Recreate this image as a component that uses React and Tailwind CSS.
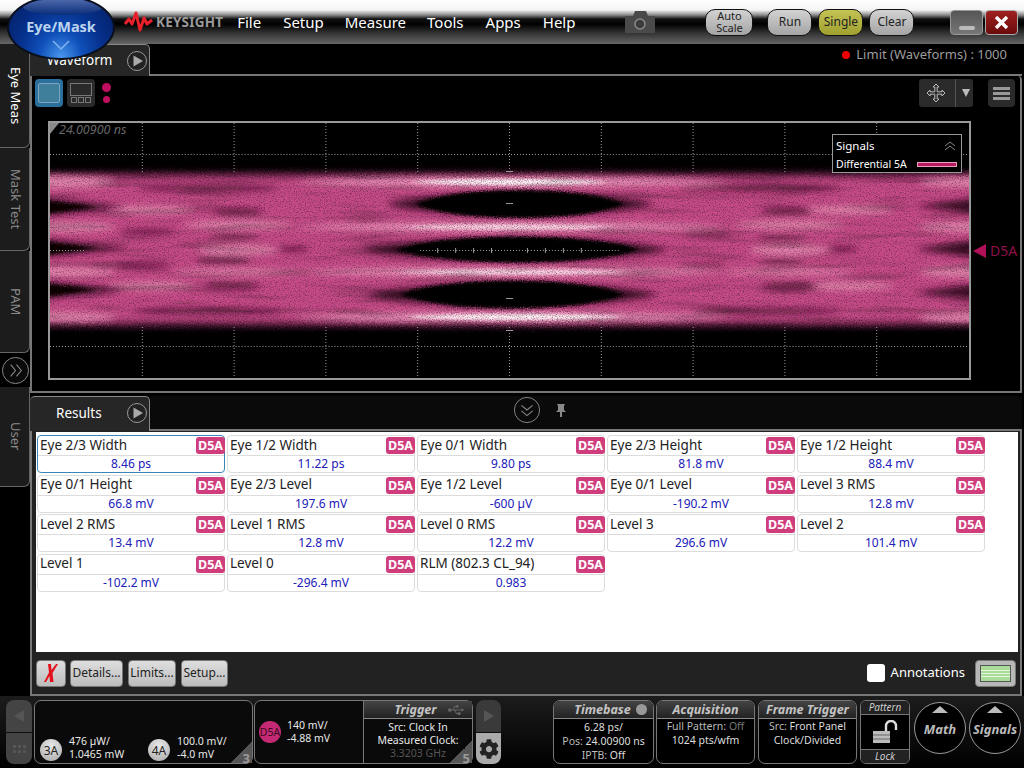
import React from 'react';
import { FaCog, FaUsb } from 'react-icons/fa';

const menuItems = [
    ['File', 'ml-[14px]'],
    ['Setup', 'ml-[22px]'],
    ['Measure', 'ml-[21px]'],
    ['Tools', 'ml-[21px]'],
    ['Apps', 'ml-[22px]'],
    ['Help', 'ml-[22px]'],
];

const results = [
    ['Eye 2/3 Width', '8.46 ps'],
    ['Eye 1/2 Width', '11.22 ps'],
    ['Eye 0/1 Width', '9.80 ps'],
    ['Eye 2/3 Height', '81.8 mV'],
    ['Eye 1/2 Height', '88.4 mV'],
    ['Eye 0/1 Height', '66.8 mV'],
    ['Eye 2/3 Level', '197.6 mV'],
    ['Eye 1/2 Level', '-600 µV'],
    ['Eye 0/1 Level', '-190.2 mV'],
    ['Level 3 RMS', '12.8 mV'],
    ['Level 2 RMS', '13.4 mV'],
    ['Level 1 RMS', '12.8 mV'],
    ['Level 0 RMS', '12.2 mV'],
    ['Level 3', '296.6 mV'],
    ['Level 2', '101.4 mV'],
    ['Level 1', '-102.2 mV'],
    ['Level 0', '-296.4 mV'],
    ['RLM (802.3 CL_94)', '0.983'],
];

const darkPatches = [
    [207, 188, 70, 3], [237, 212, 26, 3.5], [147, 232, 28, 2.5], [233, 237, 26, 2.5],
    [143, 265, 28, 2.5], [223, 260, 28, 3.5], [232, 286, 28, 3.5], [207, 311, 75, 3],
    [293, 249, 16, 2.5], [760, 188, 80, 3], [787, 211, 26, 3.5], [707, 232, 24, 2.5],
    [783, 238, 26, 2.5], [703, 266, 24, 2], [783, 262, 24, 2.5], [790, 286, 28, 3.5],
    [767, 311, 75, 3], [843, 249, 16, 2.5],
];

const lightPatches = [
    [237, 225, 55, 4], [237, 250, 40, 5], [790, 250, 40, 5], [790, 225, 55, 4],
    [150, 210, 45, 4], [850, 210, 45, 4], [150, 286, 45, 4], [850, 286, 45, 4],
    [237, 272, 65, 3], [790, 272, 65, 3], [60, 182, 55, 6], [60, 227, 55, 5],
    [60, 272, 55, 5], [60, 317, 55, 5], [965, 182, 45, 5], [965, 227, 45, 5],
    [965, 272, 45, 5], [965, 317, 45, 5],
];

const gridX = [141, 233, 325, 417, 509, 601, 693, 785, 877];

// blunt lens between two x positions, h is the half height at the middle
function lens(x0, x1, y, h) {
    const d = h * 1.33;
    const w = (x1 - x0) * 0.2;
    return `M${x0} ${y} C${x0 + w} ${y - d} ${x1 - w} ${y - d} ${x1} ${y} C${x1 - w} ${y + d} ${x0 + w} ${y + d} ${x0} ${y} Z`;
}

function PlayCircle() {
    return (
        <svg width="22" height="22" viewBox="0 0 22 22">
            <circle cx="11" cy="11" r="9.5" fill="#222" stroke="#999" strokeWidth="1"/>
            <path d="M7.5 5.5 L17 11 L7.5 16.5 Z" fill="#aaa"/>
        </svg>
    );
}

function Chevrons({size = 30}) {
    return (
        <svg width={size} height={size} viewBox="0 0 30 30">
            <circle cx="15" cy="15" r="13.5" fill="#0a0a0a" stroke="#8a8a8a" strokeWidth="1"/>
            <path d="M9 10 L15 15 L21 10 M9 16 L15 21 L21 16" fill="none" stroke="#8a8a8a" strokeWidth="1.1"/>
        </svg>
    );
}

function SideChevrons() {
    return (
        <svg width="29" height="29" viewBox="0 0 30 30">
            <circle cx="15" cy="15" r="13.5" fill="#0a0a0a" stroke="#8a8a8a" strokeWidth="1"/>
            <path d="M10 9 L15 15 L10 21 M16 9 L21 15 L16 21" fill="none" stroke="#8a8a8a" strokeWidth="1.1"/>
        </svg>
    );
}

function TopButton({children, className = ''}) {
    return (
        <div className={`flex h-[27px] items-center justify-center rounded-[10px] border border-[#111] text-center text-[12px] text-[#222] ${className}`}>
            {children}
        </div>
    );
}

function TopBar() {
    return (
        <div className="flex h-[44px] shrink-0 items-center bg-[linear-gradient(to_bottom,#fff_0px,#f4f4f4_10px,#8a8a8a_15px,#111_19px,#000_24px,#333_33px,#666_44px)]">
            <div className="ml-[124px] flex items-center">
                <svg width="29" height="24" viewBox="0 0 29 24">
                    <path d="M1 14 L5 9 L8 14 L12 3 L16 20 L20 8 L23 14 L28 10" fill="none" stroke="#e8202c" strokeWidth="3" strokeLinejoin="round"/>
                </svg>
                <span className="ml-[3px] text-[13.5px] font-bold tracking-[0.2px] text-[#9a9a9a]">KEYSIGHT</span>
            </div>
            {menuItems.map(([label, margin]) => (
                <span key={label} className={`${margin} text-[15px] text-white`}>{label}</span>
            ))}
            <svg className="ml-[50px]" width="30" height="24" viewBox="0 0 30 24">
                <path d="M0 6 H8 L10 1 H21 L23 6 H30 V23 H0 Z" fill="#4a4a4a"/>
                <circle cx="15" cy="14" r="5" fill="#3c3c3c" stroke="#8a8a8a" strokeWidth="1.5"/>
            </svg>
            <TopButton className="ml-[50px] w-[48px] bg-[linear-gradient(to_bottom,#d2d2d2,#a4a4a4)]">
                <span className="text-[11px] leading-[12px]">Auto<br/>Scale</span>
            </TopButton>
            <TopButton className="ml-[14px] w-[45px] bg-[linear-gradient(to_bottom,#d2d2d2,#a4a4a4)]">Run</TopButton>
            <TopButton className="ml-[6px] w-[45px] bg-[linear-gradient(to_bottom,#c4c454,#a0a030)]">Single</TopButton>
            <TopButton className="ml-[6px] w-[45px] bg-[linear-gradient(to_bottom,#d2d2d2,#a4a4a4)]">Clear</TopButton>
            <div className="ml-[36px] flex h-[25px] w-[33px] items-end justify-center rounded-[4px] border border-[#999] bg-[linear-gradient(to_bottom,#555,#777)] pb-[4px]">
                <div className="h-[4px] w-[16px] rounded-[2px] bg-[#bbb]"/>
            </div>
            <div className="ml-[2px] flex h-[25px] w-[33px] items-center justify-center rounded-[4px] border border-[#aaa] bg-[linear-gradient(to_bottom,#a02020,#6a0c0c)]">
                <svg width="15" height="13" viewBox="0 0 15 13">
                    <path d="M2 1 L13 12 M13 1 L2 12" stroke="#fff" strokeWidth="3.4"/>
                </svg>
            </div>
        </div>
    );
}

function EyeMaskOrb() {
    return (
        <div className="absolute left-[7px] top-[-5px] z-20 flex h-[65px] w-[108px] flex-col items-center overflow-hidden rounded-[50%] border-2 border-[#0a0f1c] bg-[radial-gradient(ellipse_at_50%_100%,#4a98f0_0%,#0f4fb8_30%,#06308c_58%,#031c5c_100%)]">
            <div className="absolute left-[14px] top-[2px] h-[16px] w-[80px] rounded-[50%] bg-[linear-gradient(to_bottom,#6f86c0,#0a2a70)] opacity-70"/>
            <span className="relative mt-[19px] text-[14.5px] font-bold text-[#bcd4ee]">Eye/Mask</span>
            <svg className="relative mt-[2px]" width="18" height="10" viewBox="0 0 18 10">
                <path d="M1 1 L9 9 L17 1" fill="none" stroke="#7fb4ee" strokeWidth="1.5"/>
            </svg>
        </div>
    );
}

function SideTab({label, active, className = ''}) {
    return (
        <div className={`flex w-[30px] items-center justify-center rounded-br-[6px] border-b border-r border-[#666] bg-[#1c1c1c] pl-[2px] ${className}`}>
            <span className={`text-[13px] [writing-mode:vertical-rl] ${active ? 'text-white' : 'text-[#8a8a8a]'}`}>{label}</span>
        </div>
    );
}

function LeftTabs() {
    return (
        <div className="flex w-[30px] shrink-0 flex-col bg-black">
            <SideTab label="Eye Meas" active className="h-[104px]"/>
            <SideTab label="Mask Test" className="h-[103px]"/>
            <SideTab label="PAM" className="h-[102px]"/>
            <div className="flex h-[34px] items-center justify-center"><SideChevrons/></div>
            <SideTab label="User" className="h-[100px]"/>
        </div>
    );
}

function WaveImage() {
    return (
        <svg className="absolute inset-0 h-full w-full" viewBox="49 123 921 255" preserveAspectRatio="none">
            <defs>
                <filter id="soft" x="-50%" y="-200%" width="200%" height="500%">
                    <feGaussianBlur stdDeviation="3"/>
                </filter>
                <filter id="softer" x="-50%" y="-200%" width="200%" height="500%">
                    <feGaussianBlur stdDeviation="1.5"/>
                </filter>
                <filter id="grain" filterUnits="userSpaceOnUse" x="0" y="100" width="1024" height="300" colorInterpolationFilters="sRGB">
                    <feTurbulence type="fractalNoise" baseFrequency="0.8" numOctaves="2" seed="7" result="n"/>
                    <feDisplacementMap in="SourceGraphic" in2="n" scale="5" xChannelSelector="R" yChannelSelector="G" result="d"/>
                    <feColorMatrix in="n" type="matrix" values="1.1 0 0 0 0.42  1.1 0 0 0 0.42  1.1 0 0 0 0.42  0 0 0 0 1" result="g"/>
                    <feBlend in="d" in2="g" mode="multiply" result="speck"/>
                    <feTurbulence type="fractalNoise" baseFrequency="0.012 0.13" numOctaves="2" seed="3" result="s"/>
                    <feColorMatrix in="s" type="matrix" values="0.6 0 0 0 0.7  0.6 0 0 0 0.7  0.6 0 0 0 0.7  0 0 0 0 1" result="streak"/>
                    <feBlend in="speck" in2="streak" mode="multiply"/>
                </filter>
            </defs>
            <rect x="49" y="123" width="921" height="255" fill="#000"/>
            <g filter="url(#grain)">
                <rect x="0" y="100" width="1024" height="300" fill="#000"/>
                <rect x="20" y="172" width="984" height="155" fill="#6a2048" filter="url(#soft)"/>
                <rect x="20" y="178" width="984" height="143" fill="#c64c88" filter="url(#soft)"/>
                <g filter="url(#soft)">
                    {lightPatches.map(([x, y, rx, ry]) => (
                        <ellipse key={`${x}-${y}`} cx={x} cy={y} rx={rx} ry={ry} fill="#e284ac"/>
                    ))}
                    {darkPatches.map(([x, y, rx, ry]) => (
                        <ellipse key={`${x}-${y}`} cx={x} cy={y} rx={rx} ry={ry} fill="#4c1030" opacity="0.8"/>
                    ))}
                    <path d={lens(290, 730, 182, 5)} fill="#ea92b8"/>
                    <path d={lens(290, 730, 227, 4.5)} fill="#ea92b8"/>
                    <path d={lens(290, 730, 272, 4.5)} fill="#ea92b8"/>
                    <path d={lens(290, 730, 317, 5)} fill="#ea92b8"/>
                </g>
                <g filter="url(#soft)">
                    <path d={lens(385, 655, 204, 11)} fill="#3c0c26"/>
                    <path d={lens(360, 670, 249.5, 11)} fill="#3c0c26"/>
                    <path d={lens(365, 660, 294.5, 11)} fill="#3c0c26"/>
                    <path d="M40 198 L125 207 L40 216 Z" fill="#3c0c26"/>
                    <path d="M40 239 L130 248 L40 257 Z" fill="#3c0c26"/>
                    <path d="M40 281 L125 290 L40 299 Z" fill="#3c0c26"/>
                    <path d="M980 198 L915 206 L980 214 Z" fill="#3c0c26"/>
                    <path d="M980 240 L915 249 L980 258 Z" fill="#3c0c26"/>
                    <path d="M980 284 L915 292 L980 300 Z" fill="#3c0c26"/>
                </g>
                <g filter="url(#softer)">
                    <path d={lens(415, 625, 204, 14)} fill="#000"/>
                    <path d={lens(395, 640, 249.5, 13)} fill="#000"/>
                    <path d={lens(400, 625, 294.5, 14)} fill="#000"/>
                    <path d="M40 200 L95 207 L40 214 Z" fill="#0a0205"/>
                    <path d="M40 241 L95 248 L40 255 Z" fill="#0a0205"/>
                    <path d="M40 283 L95 290 L40 297 Z" fill="#0a0205"/>
                    <path d={lens(410, 610, 182, 3)} fill="#fff0f6"/>
                    <path d={lens(400, 620, 227, 2.6)} fill="#fbd5e5"/>
                    <path d={lens(395, 630, 272, 2.6)} fill="#fbd5e5"/>
                    <path d={lens(405, 625, 317, 3)} fill="#fff0f6"/>
                </g>
            </g>
            <g stroke="#9a9a9a" strokeWidth="1" strokeDasharray="1 2">
                {gridX.map((x) => (
                    <path key={x} d={`M${x + 0.5} 123 V172 M${x + 0.5} 327 V378`}/>
                ))}
                <path d="M49 154.5 H970 M49 346.5 H970 M49 250.5 H85 M420 250.5 H620"/>
            </g>
            <g stroke="#9a9a9a" strokeWidth="1">
                {[437, 455, 473, 491, 527, 545, 563, 581].map((x) => (
                    <path key={x} d={`M${x + 0.5} 248 V253`}/>
                ))}
                <path d="M506 203.5 H513 M506 298.5 H513 M506 171.5 H513 M506 330.5 H513"/>
            </g>
            <path d="M49 123 H58 L49 134 Z" fill="#8a8a8a"/>
        </svg>
    );
}

function WaveformPanel() {
    return (
        <div className="flex h-[349px] flex-col">
            <div className="flex h-[32px] shrink-0">
                <div className="flex w-[120px] items-center justify-between rounded-tr-[5px] border-r border-t border-[#888] bg-[#262626] pl-[17px] pr-[1px]">
                    <span className="text-[13.5px] text-white">Waveform</span>
                    <PlayCircle/>
                </div>
                <div className="flex flex-1 items-start justify-end border-b-2 border-[#777] pr-[15px] pt-[1px]">
                    <div className="flex items-center text-[13px] text-[#9c9c9c]">
                        <span className="mr-[6px] h-[8px] w-[8px] rounded-full bg-[#f00000]"/>
                        Limit (Waveforms) : 1000
                    </div>
                </div>
            </div>
            <div className="flex min-h-0 flex-1 flex-col rounded-tr-[4px] border-b-2 border-l-2 border-r-2 border-[#777] bg-black">
                <div className="flex h-[32px] shrink-0 items-start pt-[3px]">
                    <div className="ml-[3px] flex h-[28px] w-[28px] items-center justify-center rounded-[4px] bg-[#2b6f9c]">
                        <div className="h-[20px] w-[22px] rounded-[2px] border border-[#7aa4c0] bg-[#3f7f9c]"/>
                    </div>
                    <div className="ml-[4px] flex h-[28px] w-[28px] flex-col items-center justify-center rounded-[4px] bg-[#2a2a2a]">
                        <div className="h-[13px] w-[22px] border border-[#777]"/>
                        <div className="mt-[1px] flex gap-[1px]">
                            <div className="h-[6px] w-[6px] border border-[#777]"/>
                            <div className="h-[6px] w-[6px] border border-[#777]"/>
                            <div className="h-[6px] w-[6px] border border-[#777]"/>
                        </div>
                    </div>
                    <div className="ml-[7px] mt-[4px] flex flex-col items-center gap-[4px]">
                        <div className="h-[9px] w-[9px] rounded-full bg-[#c00f60]"/>
                        <div className="h-[7px] w-[7px] rounded-full bg-[#c00f60]"/>
                    </div>
                    <div className="ml-auto flex h-[28px] w-[54px] items-center rounded-[3px] bg-[#2a2a2a]">
                        <svg className="ml-[7px]" width="20" height="20" viewBox="0 0 20 20">
                            <path d="M10 1 L13 4 H11.2 V8.8 H16 V7 L19 10 L16 13 V11.2 H11.2 V16 H13 L10 19 L7 16 H8.8 V11.2 H4 V13 L1 10 L4 7 V8.8 H8.8 V4 H7 Z" fill="#2a2a2a" stroke="#bbb" strokeWidth="1"/>
                        </svg>
                        <div className="ml-[9px] flex h-full items-center border-l border-[#555] pl-[6px]">
                            <div className="h-0 w-0 border-x-[4px] border-t-[8px] border-x-transparent border-t-[#bbb]"/>
                        </div>
                    </div>
                    <div className="ml-[15px] mr-[5px] flex h-[28px] w-[27px] flex-col items-center justify-center gap-[2px] rounded-[4px] bg-[#2a2a2a]">
                        <div className="h-[3px] w-[17px] bg-[#999]"/>
                        <div className="h-[3px] w-[17px] bg-[#999]"/>
                        <div className="h-[3px] w-[17px] bg-[#999]"/>
                    </div>
                </div>
                <div className="flex pt-[13px]">
                    <div className="relative ml-[16px] h-[259px] w-[923px] shrink-0 border-2 border-[#999]">
                        <WaveImage/>
                        <span className="absolute left-[9px] top-[-2px] text-[12.5px] italic text-[#666]">24.00900 ns</span>
                        <div className="absolute left-[782px] top-[11px] h-[39px] w-[130px] border border-[#999] bg-black pl-[3px] pt-[2px] text-[11.5px] leading-[18px] text-white">
                            <div className="flex items-center justify-between pr-[5px]">
                                <span>Signals</span>
                                <svg width="12" height="10" viewBox="0 0 12 10">
                                    <path d="M1 5 L6 1 L11 5 M1 9 L6 5 L11 9" fill="none" stroke="#888" strokeWidth="1"/>
                                </svg>
                            </div>
                            <div className="flex items-center justify-between pr-[4px] text-[10.5px]">
                                <span>Differential 5A</span>
                                <div className="h-[5px] w-[40px] border border-[#e8a0c0] bg-[#b81a62]"/>
                            </div>
                        </div>
                    </div>
                    <div className="ml-[2px] flex items-center">
                        <div className="h-0 w-0 border-y-[7px] border-r-[13px] border-y-transparent border-r-[#b01058]"/>
                        <span className="ml-[4px] text-[14px] text-[#8c0f48]">D5A</span>
                    </div>
                </div>
            </div>
        </div>
    );
}

function ResultCell({name, value, selected}) {
    return (
        <div className={`h-[38px] rounded-[4px] border ${selected ? 'border-[#3a86b8]' : 'border-[#dcdcdc]'}`}>
            <div className="flex h-[20px] items-center justify-between border-b border-[#dcdcdc] pl-[2px] text-[13.5px] leading-none text-[#222]">
                <span>{name}</span>
                <span className="mr-[-1px] rounded-[3px] bg-[#cf3d7c] px-[2px] py-[1px] text-[12.5px] font-bold leading-[15px] text-white">D5A</span>
            </div>
            <div className="text-center text-[12px] leading-[16px] text-[#2020b8]">{value}</div>
        </div>
    );
}

function GrayButton({children, className = ''}) {
    return (
        <div className={`flex h-[27px] items-center justify-center rounded-[4px] border border-[#777] bg-[linear-gradient(to_bottom,#dedede,#bcbcbc)] text-[12px] text-[#222] ${className}`}>
            {children}
        </div>
    );
}

function ResultsPanel() {
    return (
        <div className="flex min-h-0 flex-1 flex-col pt-[3px]">
            <div className="flex h-[35px] shrink-0">
                <div className="flex w-[120px] items-center justify-between rounded-t-[5px] border-r border-t border-[#888] bg-[#262626] pb-[2px] pl-[26px] pr-[1px]">
                    <span className="text-[13.5px] text-white">Results</span>
                    <PlayCircle/>
                </div>
                <div className="flex flex-1 items-center border-b-2 border-[#777] bg-[#0a0a0a] pb-[5px] pl-[363px]">
                    <Chevrons size={28}/>
                    <svg className="ml-[14px]" width="12" height="14" viewBox="0 0 12 14">
                        <path d="M2 1 H10 L9 3 V7 L11 9 H7 V14 H5 V9 H1 L3 7 V3 Z" fill="#888"/>
                    </svg>
                </div>
            </div>
            <div className="flex min-h-0 flex-1 flex-col border-x-2 border-b-2 border-[#777] bg-[#222]">
                <div className="ml-[4px] mr-[2px] mt-[1px] h-[220px] shrink-0 bg-white pl-[1px] pt-[3px]">
                    <div className="grid grid-cols-[188px_188px_188px_188px_188px] gap-x-[2px] gap-y-[1.5px]">
                        {results.map(([name, value], i) => (
                            <ResultCell key={name} name={name} value={value} selected={i === 0}/>
                        ))}
                    </div>
                </div>
                <div className="flex flex-1 items-center pl-[4px] pr-[4px]">
                    <GrayButton className="w-[30px]">
                        <svg width="14" height="20" viewBox="0 0 14 20">
                            <path d="M4 1 H7 L7.5 7 L12 1 H14 L8.5 10 L9.5 19 H6 L5.5 13 L2 19 H0 L5 9.5 Z" fill="#e5101c"/>
                        </svg>
                    </GrayButton>
                    <GrayButton className="ml-[4px] w-[53px]">Details...</GrayButton>
                    <GrayButton className="ml-[5px] w-[48px]">Limits...</GrayButton>
                    <GrayButton className="ml-[5px] w-[47px]">Setup...</GrayButton>
                    <div className="ml-auto h-[18px] w-[18px] rounded-[3px] bg-white"/>
                    <span className="ml-[6px] text-[13px] text-white">Annotations</span>
                    <div className="ml-[10px] flex h-[27px] w-[41px] items-center justify-center rounded-[4px] border border-[#777] bg-[#b8b8b8]">
                        <div className="flex h-[17px] w-[31px] flex-col justify-center gap-[2px] border border-[#555] bg-[#a8dc98]">
                            <div className="h-[1px] bg-[#e8f8e0]"/>
                            <div className="h-[1px] bg-[#e8f8e0]"/>
                            <div className="h-[1px] bg-[#e8f8e0]"/>
                        </div>
                    </div>
                </div>
            </div>
        </div>
    );
}

function Corner({n}) {
    return (
        <div className="absolute bottom-0 right-0 h-[22px] w-[22px] bg-[linear-gradient(135deg,transparent_50%,#555_50%)]">
            <span className="absolute bottom-[-2px] right-[2px] text-[13px] font-bold text-[#9a9a9a]">{n}</span>
        </div>
    );
}

function ChannelBadge({label}) {
    return (
        <div className="flex h-[22px] w-[22px] shrink-0 items-center justify-center rounded-full bg-[radial-gradient(circle_at_50%_30%,#e8e8e8,#a8a8a8)] text-[12px] text-[#222]">
            {label}
        </div>
    );
}

function InfoPanel({title, className = '', children}) {
    return (
        <div className={`flex h-[64px] flex-col overflow-hidden rounded-[7px] border border-[#777] bg-black text-center text-[10.5px] leading-[14px] text-[#ddd] ${className}`}>
            <div className="flex h-[18px] shrink-0 items-center justify-center border-b border-[#888] bg-[linear-gradient(to_bottom,#444,#222)] text-[12.5px] font-bold italic text-[#c4c4c4]">
                {title}
            </div>
            {children}
        </div>
    );
}

function RoundButton({label, className = ''}) {
    return (
        <div className={`flex h-[52px] w-[52px] flex-col items-center rounded-full border border-[#999] bg-black ${className}`}>
            <div className="mt-[3px] h-0 w-0 border-x-[8px] border-b-[7px] border-x-transparent border-b-[#bbb]"/>
            <span className="mt-[7px] text-[13px] font-bold italic text-[#bbb]">{label}</span>
        </div>
    );
}

function BottomBar() {
    return (
        <div className="flex h-[72px] shrink-0 items-start bg-[linear-gradient(to_bottom,#1c1c1c,#000)] pt-[4px]">
            <div className="ml-[6px] flex h-[64px] w-[26px] flex-col gap-[1px]">
                <div className="flex h-[32px] items-center justify-center rounded-t-[8px] bg-[#444]">
                    <div className="h-0 w-0 border-y-[6px] border-r-[10px] border-y-transparent border-r-[#555]"/>
                </div>
                <div className="flex h-[31px] items-center justify-center rounded-b-[8px] bg-[#444]">
                    <div className="grid grid-cols-3 gap-[2px]">
                        <div className="h-[3px] w-[3px] bg-[#555]"/>
                        <div className="h-[3px] w-[3px] bg-[#555]"/>
                        <div className="h-[3px] w-[3px] bg-[#555]"/>
                        <div className="h-[3px] w-[3px] bg-[#555]"/>
                        <div className="h-[3px] w-[3px] bg-[#555]"/>
                        <div className="h-[3px] w-[3px] bg-[#555]"/>
                    </div>
                </div>
            </div>
            <div className="relative ml-[2px] flex h-[64px] w-[219px] items-end rounded-[7px] border border-[#777] bg-[#0a0a0a] pb-[2px] pl-[5px] text-[10.5px] leading-[13px] text-[#e8e8e8]">
                <ChannelBadge label="3A"/>
                <div className="ml-[7px] w-[79px]">476 µW/<br/>1.0465 mW</div>
                <ChannelBadge label="4A"/>
                <div className="ml-[7px]">100.0 mV/<br/>-4.0 mV</div>
                <Corner n="3"/>
            </div>
            <div className="relative ml-[1px] flex h-[64px] w-[219px] rounded-[7px] border border-[#777] bg-[#0a0a0a] text-[10.5px] leading-[13px] text-[#e8e8e8]">
                <div className="flex w-[109px] shrink-0 items-start border-r border-[#777] pl-[4px] pt-[20px]">
                    <div className="flex h-[22px] w-[22px] shrink-0 items-center justify-center rounded-full bg-[#c42a74] text-[10.5px] text-[#3a0a20]">D5A</div>
                    <div className="ml-[6px] mt-[-2px]">140 mV/<br/>-4.88 mV</div>
                </div>
                <div className="flex flex-1 flex-col text-center">
                    <div className="flex h-[18px] items-center justify-center gap-[11px] border-b border-[#888] bg-[linear-gradient(to_bottom,#444,#222)] pl-[22px] text-[12.5px] font-bold italic text-[#c4c4c4]">
                        Trigger
                        <FaUsb className="text-[#666]" size={16}/>
                    </div>
                    <div className="pt-[2px] leading-[13px]">
                        <div>Src: Clock In</div>
                        <div>Measured Clock:</div>
                        <div className="text-[#555]">3.3203 GHz</div>
                    </div>
                </div>
                <Corner n="5"/>
            </div>
            <div className="ml-[3px] flex h-[64px] w-[25px] flex-col gap-[1px]">
                <div className="flex h-[32px] items-center justify-center rounded-t-[8px] bg-[#3a3a3a]">
                    <div className="h-0 w-0 border-y-[6px] border-l-[10px] border-y-transparent border-l-[#555]"/>
                </div>
                <div className="flex h-[31px] items-center justify-center rounded-b-[8px] bg-[#aaa]">
                    <FaCog className="text-[#222]" size={20}/>
                </div>
            </div>
            <InfoPanel title={<span className="flex items-center gap-[5px] pl-[14px]">Timebase<span className="h-[11px] w-[11px] rounded-full bg-[#999]"/></span>} className="ml-[52px] w-[101px]">
                <div className="pt-[1px]">6.28 ps/<br/><span className="text-[#bbb]">Pos:</span> 24.00900 ns<br/><span className="text-[#bbb]">IPTB:</span> Off</div>
            </InfoPanel>
            <InfoPanel title="Acquisition" className="ml-[2px] w-[99px]">
                <div><span className="text-[#bbb]">Full Pattern:</span> <span className="text-[#777]">Off</span><br/>1024 pts/wfm</div>
            </InfoPanel>
            <InfoPanel title="Frame Trigger" className="ml-[3px] w-[99px]">
                <div><span className="text-[#bbb]">Src:</span> Front Panel<br/>Clock/Divided</div>
            </InfoPanel>
            <div className="ml-[3px] flex h-[64px] w-[50px] flex-col overflow-hidden rounded-[6px] border border-[#777] bg-black text-center text-[10px] italic text-[#ccc]">
                <div className="h-[14px] shrink-0 border-b border-[#777] bg-[#222] leading-[13px]">Pattern</div>
                <div className="flex flex-1 items-center justify-center">
                    <svg width="28" height="24" viewBox="0 0 28 24">
                        <path d="M15 11 V6 A5 5 0 0 1 25 6 V10" fill="none" stroke="#ddd" strokeWidth="2.4"/>
                        <rect x="2" y="11" width="17" height="12" fill="#bbb"/>
                        <path d="M2 15 H19 M2 19 H19" stroke="#666" strokeWidth="1"/>
                    </svg>
                </div>
                <div className="h-[14px] shrink-0 border-t border-[#777] bg-[#222] leading-[13px]">Lock</div>
            </div>
            <RoundButton label="Math" className="ml-[4px] mt-[2px]"/>
            <RoundButton label="Signals" className="ml-[3px] mt-[2px]"/>
        </div>
    );
}

export default function App() {
    return (
        <div className="relative flex h-[768px] w-[1024px] flex-col overflow-hidden bg-black font-['Noto_Sans','DejaVu_Sans',sans-serif]">
            <TopBar/>
            <EyeMaskOrb/>
            <div className="flex min-h-0 flex-1">
                <LeftTabs/>
                <div className="flex min-w-0 flex-1 flex-col pr-[2px]">
                    <WaveformPanel/>
                    <ResultsPanel/>
                </div>
            </div>
            <BottomBar/>
        </div>
    );
}
